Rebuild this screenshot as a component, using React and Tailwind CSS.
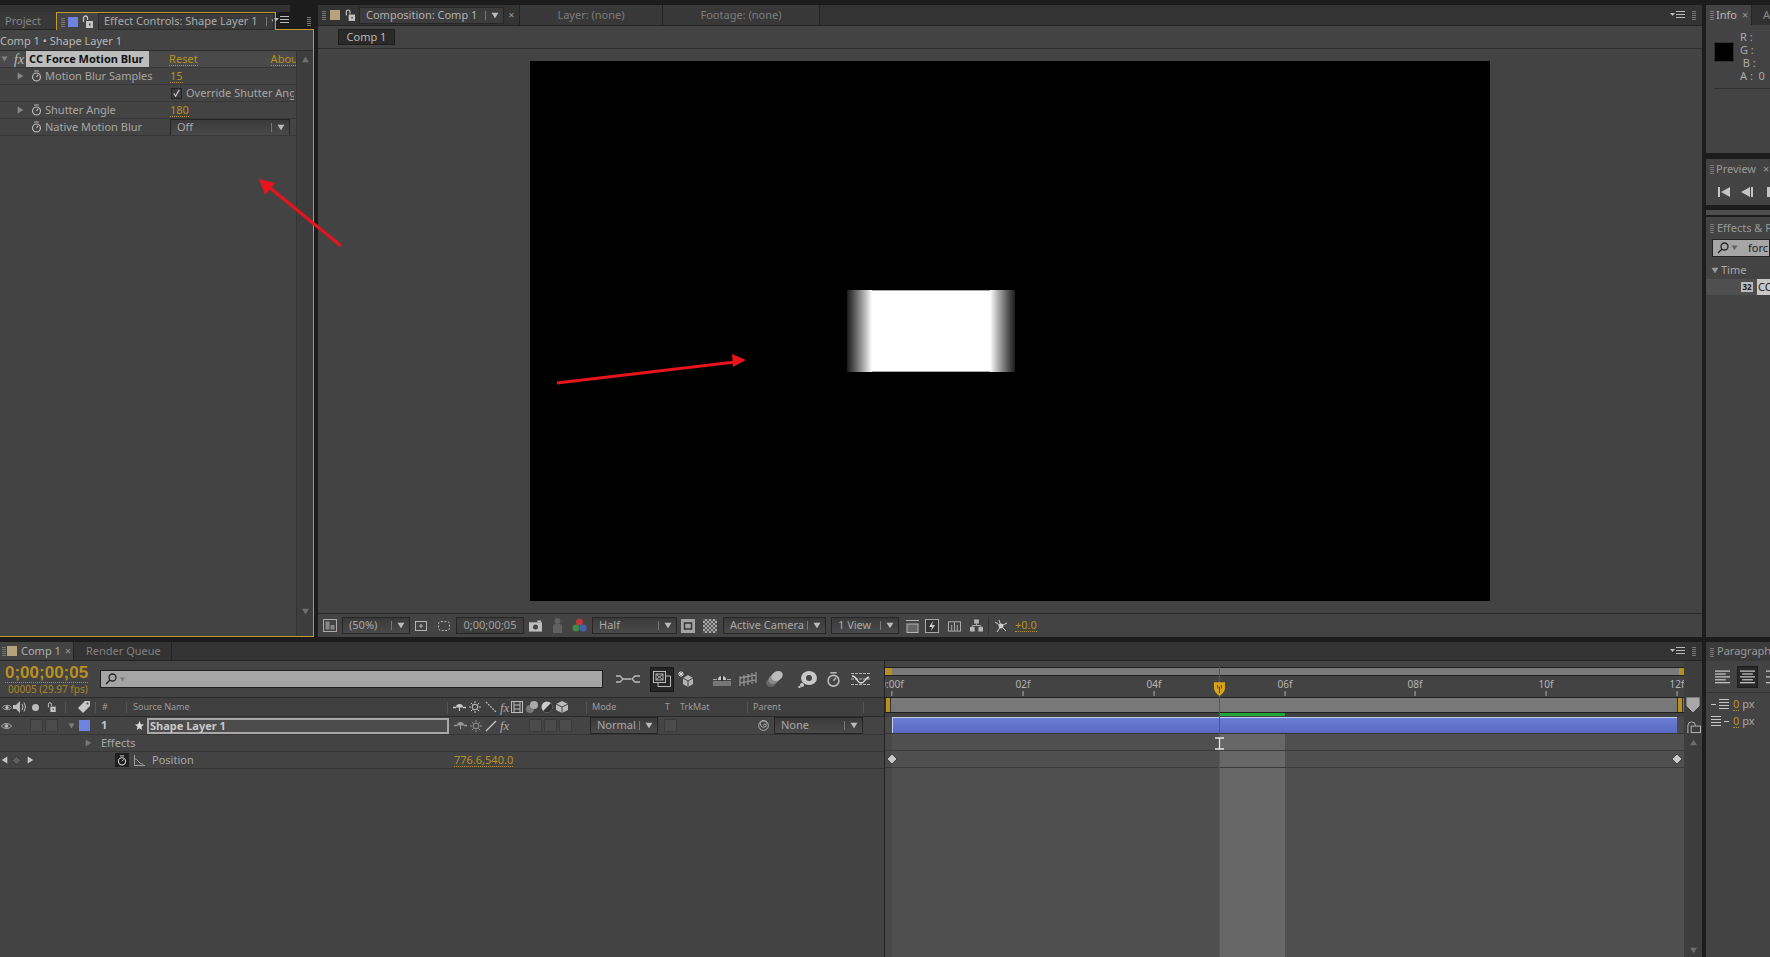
import React from 'react';

const GOLD = 'text-[#b8901f]';

function Tri({ dir = 'down', className = 'w-[7px] h-[7px] text-[#8a8a8a]' }) {
  const points = { down: '0,1 10,1 5,9', right: '1,0 9,5 1,10', left: '9,0 1,5 9,10', up: '0,9 10,9 5,1' }[dir];
  return (
    <svg viewBox="0 0 10 10" className={`shrink-0 ${className}`}>
      <polygon points={points} fill="currentColor" />
    </svg>
  );
}

function Grip({ className = '' }) {
  return <div className={`w-[4px] h-[10px] shrink-0 bg-[repeating-linear-gradient(0deg,#777_0,#777_1px,transparent_1px,transparent_2px)] ${className}`} />;
}

function MenuIcon({ className = '' }) {
  return (
    <svg viewBox="0 0 16 10" className={`w-[16px] h-[10px] shrink-0 ${className}`}>
      <polygon points="0,3 5,3 2.5,6" fill="#bbb" />
      <path d="M6 1.5h9M6 4.5h9M6 7.5h9" stroke="#bbb" strokeWidth="1.2" />
    </svg>
  );
}

function Stopwatch({ className = 'w-[12px] h-[13px]', color = '#bbb' }) {
  return (
    <svg viewBox="0 0 12 13" className={`shrink-0 ${className}`} fill="none" stroke={color}>
      <circle cx="6" cy="7.5" r="4.3" strokeWidth="1.3" />
      <path d="M3.5 1h5M6 7.5L8 5" strokeWidth="1.2" />
    </svg>
  );
}

function Lock({ className = 'w-[11px] h-[13px]' }) {
  return (
    <svg viewBox="0 0 11 13" className={`shrink-0 ${className}`}>
      <path d="M1.5 7V3a2 2 0 0 1 4 0v2" fill="none" stroke="#c4c4c4" strokeWidth="1.3" />
      <rect x="4" y="6" width="7" height="7" fill="#c4c4c4" />
      <rect x="7" y="8.5" width="1.5" height="2" fill="#444" />
    </svg>
  );
}

function Eye({ className = 'w-[11px] h-[8px]' }) {
  return (
    <svg viewBox="0 0 12 8" className={`shrink-0 ${className}`}>
      <path d="M0.5 4C3 0.5 9 0.5 11.500 4C9 7.500 3 7.500 0.500 4Z" fill="none" stroke="#bbb" />
      <circle cx="6" cy="4" r="2" fill="#bbb" />
    </svg>
  );
}

function Diamond({ className = 'w-[9px] h-[9px]', fill = '#c8c8c8' }) {
  return (
    <svg viewBox="0 0 10 10" className={`shrink-0 ${className}`}>
      <polygon points="5,0 10,5 5,10 0,5" fill={fill} stroke="#222" strokeWidth="0.7" />
    </svg>
  );
}

function Dropdown({ label, className = '' }) {
  return (
    <div className={`h-[17px] flex items-center shrink-0 border border-[#252525] bg-gradient-to-b from-[#3a3a3a] to-[#494949] text-[#a8a8a8] ${className}`}>
      <span className="flex-1 pl-[6px] truncate">{label}</span>
      <span className="w-px h-[9px] bg-[#777]" />
      <span className="w-[17px] flex justify-center"><Tri className="w-[8px] h-[7px] text-[#bbb]" /></span>
    </div>
  );
}

function Dotted({ children, className = '' }) {
  return <span className={`${GOLD} border-b border-dotted border-[#b8901f] leading-[12px] ${className}`}>{children}</span>;
}

function EffectRow({ children, className = 'bg-[#434343]' }) {
  return <div className={`h-[17px] flex items-center border-b border-[#373737] whitespace-nowrap overflow-hidden ${className}`}>{children}</div>;
}

function EffectControls() {
  return (
    <div className="w-[314px] h-full flex flex-col">
      <div className="h-[7px] w-[290px] bg-[#323232]" />
      <div className="h-[18px] flex">
        <div className="w-[56px] bg-[#383838] border-b border-[#232323] text-[#868686] pl-[5px] leading-[18px]">Project</div>
        <div className="w-[220px] border-t border-x border-[#c09a2a] bg-[#434343] flex items-center pl-[4px] text-[#aaa]">
          <Grip className="mr-[3px]" />
          <div className="w-[10px] h-[10px] bg-[#6e82e0] mr-[4px] shrink-0" />
          <Lock />
          <div className="ml-[5px] w-[176px] h-[17px] bg-[#3a3a3a] border border-[#2a2a2a] flex items-center pl-[5px] whitespace-nowrap overflow-hidden">
            Effect Controls: Shape Layer 1
            <span className="ml-[8px] w-px h-[9px] bg-[#777] shrink-0" />
            <Tri className="ml-[4px] w-[6px] h-[5px] text-[#bbb]" />
          </div>
        </div>
        <div className="flex-1 border-b border-[#c09a2a] flex items-center relative">
          <MenuIcon className="absolute left-[-2px] top-[3px]" />
          <Grip className="ml-[31px]" />
        </div>
      </div>
      <div className="flex-1 min-h-0 bg-[#434343] border-r border-b border-[#c09a2a] flex flex-col">
        <div className="h-[21px] leading-[21px] border-b border-[#2b2b2b] text-[#b8b8b8] whitespace-nowrap">Comp 1 • Shape Layer 1</div>
        <div className="flex-1 min-h-0 flex">
          <div className="w-[296px] text-[#a6a6a6]">
            <EffectRow className="bg-[#4a4a4a]">
              <Tri className="ml-[1px] w-[7px] h-[6px] text-[#808080]" />
              <span className="ml-[6px] font-['Liberation_Serif',serif] italic text-[14px] text-[#bbb] w-[11px]">fx</span>
              <span className="ml-[2px] w-[123px] h-[16px] bg-[#bdbdbd] text-[#111] font-bold pl-[3px] leading-[16px] overflow-hidden shrink-0">CC Force Motion Blur</span>
              <Dotted className="ml-[20px]">Reset</Dotted>
              <Dotted className="ml-[73px]">About</Dotted>
            </EffectRow>
            <EffectRow>
              <Tri dir="right" className="ml-[17px] w-[7px] h-[8px] text-[#888]" />
              <Stopwatch className="ml-[7px] w-[11px] h-[12px]" />
              <span className="ml-[3px] w-[125px] pt-[1px]">Motion Blur Samples</span>
              <Dotted>15</Dotted>
            </EffectRow>
            <EffectRow>
              <span className="ml-[171px] w-[11px] h-[11px] border border-[#222] bg-[#3b3b3b] flex items-center justify-center shrink-0">
                <svg viewBox="0 0 10 10" className="w-[9px] h-[9px]"><path d="M2 5l2 3 4-7" fill="none" stroke="#ccc" strokeWidth="1.3" /></svg>
              </span>
              <span className="ml-[4px] w-[108px] overflow-hidden shrink-0 pt-[1px]">Override Shutter Angle</span>
            </EffectRow>
            <EffectRow>
              <Tri dir="right" className="ml-[17px] w-[7px] h-[8px] text-[#888]" />
              <Stopwatch className="ml-[7px] w-[11px] h-[12px]" />
              <span className="ml-[3px] w-[125px]">Shutter Angle</span>
              <Dotted>180</Dotted>
            </EffectRow>
            <EffectRow>
              <Stopwatch className="ml-[31px] w-[11px] h-[12px]" />
              <span className="ml-[3px] w-[125px] pt-[1px]">Native Motion Blur</span>
              <Dropdown label="Off" className="w-[120px] h-[15px]" />
            </EffectRow>
          </div>
          <div className="flex-1 bg-[#3d3d3d] border-l border-[#333] flex flex-col items-center justify-between pt-[5px] pb-[21px]">
            <Tri dir="up" className="w-[11px] h-[7px] text-[#6e6e6e]" />
            <Tri className="w-[11px] h-[7px] text-[#6e6e6e]" />
          </div>
        </div>
      </div>
    </div>
  );
}

function CompFooter() {
  return (
    <div className="h-[24px] border-t border-[#2a2a2a] flex items-center text-[#a0a0a0] pl-[5px] whitespace-nowrap">
      <svg viewBox="0 0 14 13" className="w-[14px] h-[13px] shrink-0"><rect x="0.500" y="0.500" width="13" height="12" fill="none" stroke="#aaa" /><rect x="2.500" y="2.500" width="4" height="8" fill="#888" /><rect x="7.500" y="6" width="4" height="4.500" fill="#888" /></svg>
      <Dropdown label="(50%)" className="ml-[5px] w-[68px]" />
      <svg viewBox="0 0 14 14" className="ml-[4px] w-[14px] h-[14px] shrink-0" fill="none" stroke="#b4b4b4"><rect x="1.500" y="2.500" width="11" height="9" /><path d="M7 5v4M5 7h4" /></svg>
      <svg viewBox="0 0 14 14" className="ml-[9px] w-[14px] h-[14px] shrink-0" fill="none" stroke="#b4b4b4"><rect x="1.500" y="2.500" width="11" height="9" rx="2.500" strokeDasharray="2 1.500" /></svg>
      <div className="ml-[5px] w-[68px] h-[17px] border border-[#252525] bg-[#3d3d3d] flex items-center justify-center">0;00;00;05</div>
      <svg viewBox="0 0 14 12" className="ml-[5px] w-[13px] h-[12px] shrink-0"><rect y="2" width="14" height="10" fill="#bdbdbd" /><rect x="9" width="4" height="2" fill="#bdbdbd" /><circle cx="7" cy="7" r="2.700" fill="#444" /></svg>
      <svg viewBox="0 0 11 15" className="ml-[10px] w-[11px] h-[15px] shrink-0"><circle cx="5.500" cy="3" r="3" fill="#616161" /><path d="M1 15V8q0-2 2-2h5q2 0 2 2v7z" fill="#616161" /></svg>
      <svg viewBox="0 0 15 15" className="ml-[9px] w-[15px] h-[15px] shrink-0"><circle cx="7.500" cy="4" r="3.500" fill="#b83a3a" /><circle cx="4" cy="10" r="3.500" fill="#3f8a45" /><circle cx="11" cy="10" r="3.500" fill="#4661b0" /></svg>
      <Dropdown label="Half" className="ml-[5px] w-[85px]" />
      <svg viewBox="0 0 14 14" className="ml-[4px] w-[14px] h-[14px] shrink-0"><rect width="14" height="14" fill="#a4a4a4" /><rect x="3.500" y="4" width="7" height="6" fill="none" stroke="#333" strokeWidth="1.500" /></svg>
      <div className="ml-[8px] w-[14px] h-[14px] shrink-0 bg-[repeating-conic-gradient(#aaa_0_25%,#555_0_50%)] bg-[length:4px_4px]" />
      <Dropdown label="Active Camera" className="ml-[6px] w-[103px]" />
      <Dropdown label="1 View" className="ml-[5px] w-[68px]" />
      <svg viewBox="0 0 13 14" className="ml-[7px] w-[13px] h-[14px] shrink-0" fill="none" stroke="#b4b4b4"><path d="M0 1.500h13" /><rect x="1" y="5" width="11" height="8.500" fill="#666" /></svg>
      <svg viewBox="0 0 14 14" className="ml-[6px] w-[14px] h-[14px] shrink-0"><rect x="0.500" y="0.500" width="13" height="13" fill="#333" stroke="#aaa" /><polygon points="8,2 4,8 7,8 6,12 10,6 7,6" fill="#ccc" /></svg>
      <svg viewBox="0 0 14 13" className="ml-[9px] w-[13px] h-[13px] shrink-0" fill="none" stroke="#b4b4b4"><rect x="0.500" y="2.500" width="13" height="10" /><path d="M4 6v6M7 3v9M10 6v6" /></svg>
      <svg viewBox="0 0 14 13" className="ml-[9px] w-[13px] h-[13px] shrink-0"><rect x="4.500" width="5" height="4.500" fill="#b4b4b4" /><rect y="8" width="5" height="5" fill="#b4b4b4" /><rect x="9" y="8" width="5" height="5" fill="#b4b4b4" /><path d="M7 4.500v2M2.500 8V6.500h9V8" fill="none" stroke="#b4b4b4" /></svg>
      <span className="ml-[5px] w-px h-[18px] bg-[#333]" />
      <svg viewBox="0 0 14 14" className="ml-[5px] w-[14px] h-[14px] shrink-0" stroke="#d0d0d0" strokeWidth="1"><path d="M7 7L1 3M7 7L5 1M7 7l6-3M7 7l5 5M7 7L3 13" /><circle cx="7" cy="7" r="2" fill="#d0d0d0" /></svg>
      <Dotted className="ml-[7px]">+0.0</Dotted>
    </div>
  );
}

function CompPanel() {
  return (
    <div className="w-[1384px] h-full bg-[#434343] flex flex-col ml-[4px]">
      <div className="h-[21px] bg-[#333] border-b border-[#232323] flex items-center relative whitespace-nowrap">
        <Grip className="ml-[4px]" />
        <div className="ml-[4px] w-[10px] h-[10px] bg-[#b6a27c]" />
        <Lock className="ml-[5px] w-[10px] h-[12px]" />
        <div className="ml-[4px] w-[145px] h-[17px] bg-[#3c3c3c] border border-[#262626] flex items-center text-[#b0b0b0] pl-[6px]">
          <span className="flex-1">Composition: Comp 1</span>
          <span className="w-px h-[9px] bg-[#777]" />
          <span className="w-[17px] flex justify-center"><Tri className="w-[8px] h-[7px] text-[#bbb]" /></span>
        </div>
        <span className="w-[15px] text-center text-[#999]">×</span>
        <div className="w-[144px] h-full border-x border-[#232323] bg-[#383838] flex items-center justify-center text-[#7c7c7c]">Layer: (none)</div>
        <div className="w-[157px] h-full border-r border-[#232323] bg-[#383838] flex items-center justify-center text-[#7c7c7c]">Footage: (none)</div>
        <div className="flex-1" />
        <MenuIcon className="mr-[6px]" />
        <Grip className="mr-[6px]" />
      </div>
      <div className="h-[23px] border-b border-[#2c2c2c] flex items-center pl-[20px] pb-[1px]">
        <div className="w-[57px] h-[16px] bg-[#2a2a2a] border border-[#1e1e1e] text-[#b8b8b8] text-center leading-[14px]">Comp 1</div>
      </div>
      <div className="flex-1 min-h-0 flex items-center justify-center">
        <div className="w-[960px] h-[540px] bg-black flex items-center">
          <div className="ml-[317px] w-[168px] h-[82px] flex">
            <div className="w-[25px] bg-gradient-to-r from-[#1c1c1c] via-[#858585] to-white" />
            <div className="flex-1 bg-white border-y border-[#aaa]" />
            <div className="w-[25px] bg-gradient-to-l from-[#1c1c1c] via-[#858585] to-white" />
          </div>
        </div>
      </div>
      <CompFooter />
    </div>
  );
}

function SmallTab({ label, width, close, active }) {
  return (
    <div className={`h-full flex items-center border-r border-[#252525] ${width} ${active ? 'bg-[#434343]' : 'bg-[#383838]'}`}>
      <Grip className="ml-[4px] mr-[2px]" />
      <span className={active ? 'text-[#b8b8b8]' : 'text-[#8a8a8a]'}>{label}</span>
      {close ? <span className="ml-[5px] text-[#999]">×</span> : null}
    </div>
  );
}

function RightColumn() {
  return (
    <div className="flex-1 h-full ml-[4px] flex flex-col min-w-0 overflow-hidden">
      <div className="h-[148px] bg-[#434343] flex flex-col">
        <div className="h-[20px] bg-[#303030] flex">
          <SmallTab label="Info" width="w-[48px]" close active />
          <div className="flex-1 pl-[11px] leading-[20px] text-[#888]">A</div>
        </div>
        <div className="flex-1 pl-[8px] relative">
          <div className="flex pt-[5px] border-b border-[#2f2f2f] h-[64px]">
            <div className="w-[20px] h-[20px] mt-[12px] bg-black mr-[6px] border border-[#333]" />
            <div className="text-[#aaa] leading-[13px]">
              <div>R :</div>
              <div>G :</div>
              <div>&nbsp;B :</div>
              <div>A :&nbsp; 0</div>
            </div>
          </div>
        </div>
      </div>
      <div className="h-[46px] mt-[6px] bg-[#434343]">
        <div className="h-[20px] flex items-center">
          <Grip className="ml-[4px] mr-[2px]" />
          <span className="text-[#999]">Preview</span>
          <span className="ml-[7px] text-[#999]">×</span>
        </div>
        <div className="h-[26px] flex items-center pl-[12px]">
          <svg viewBox="0 0 12 10" className="w-[12px] h-[10px] shrink-0"><rect width="2" height="10" fill="#c4c4c4" /><polygon points="12,0 12,10 3,5" fill="#c4c4c4" /></svg>
          <svg viewBox="0 0 12 10" className="ml-[11px] w-[12px] h-[10px] shrink-0"><polygon points="9,0 9,10 0,5" fill="#c4c4c4" /><rect x="10" width="2" height="10" fill="#c4c4c4" /></svg>
          <div className="ml-[14px] w-[10px] h-[10px] bg-[#c4c4c4] shrink-0" />
        </div>
      </div>
      <div className="h-[5px] mt-[5px] bg-[#4e4e4e]" />
      <div className="flex-1 mt-[2px] bg-[#434343] flex flex-col">
        <div className="h-[22px] flex items-center">
          <Grip className="ml-[4px] mr-[3px]" />
          <span className="text-[#999] whitespace-nowrap">Effects &amp; Presets</span>
        </div>
        <div className="h-[18px] ml-[6px] bg-[#a6a6a6] border border-[#222] flex items-center pl-[4px] text-[#222] whitespace-nowrap">
          <svg viewBox="0 0 12 12" className="w-[12px] h-[12px] shrink-0" fill="none" stroke="#222" strokeWidth="1.300"><circle cx="7.500" cy="4.500" r="3.500" /><path d="M5 7l-4 4" /></svg>
          <Tri className="ml-[2px] w-[7px] h-[6px] text-[#666]" />
          <span className="ml-[10px]">forc</span>
        </div>
        <div className="mt-[4px] h-[18px] flex items-center pl-[5px] text-[#a8a8a8]">
          <Tri className="w-[8px] h-[7px] text-[#999]" />
          <span className="ml-[2px]">Time</span>
        </div>
        <div className="h-[16px] bg-[#4f4f4f] flex items-center pl-[35px]">
          <span className="w-[12px] h-[10px] bg-[#bbb] text-[#222] text-[8px] leading-[10px] text-center font-bold shrink-0">32</span>
          <span className="ml-[4px] flex-1 h-full bg-[#c8c8c8] text-[#222] pl-[1px] leading-[16px]">CC</span>
        </div>
      </div>
    </div>
  );
}

function TimelineToolbar() {
  return (
    <div className="h-[36px] flex items-center relative whitespace-nowrap">
      <div className="w-[100px] pl-[5px] pt-[1px]">
        <div className={`font-['Liberation_Sans',sans-serif] font-bold text-[17px] leading-[18px] ${GOLD} border-b border-dotted border-[#b8901f] w-fit`}>0;00;00;05</div>
        <div className="text-[10px] leading-[13px] pl-[3px] text-[#a88526]">00005 (29.97 fps)</div>
      </div>
      <div className="w-[503px] h-[18px] bg-[#a5a5a5] border border-[#1e1e1e] flex items-center pl-[4px]">
        <svg viewBox="0 0 12 12" className="w-[12px] h-[12px] shrink-0" fill="none" stroke="#222" strokeWidth="1.300"><circle cx="7.500" cy="4.500" r="3.500" /><path d="M5 7l-4 4" /></svg>
        <Tri className="ml-[2px] w-[7px] h-[5px] text-[#777]" />
      </div>
      <svg viewBox="0 0 24 13" className="ml-[13px] w-[24px] h-[13px] shrink-0" fill="none" stroke="#bbb" strokeWidth="1.300"><path d="M0 3h4l3 3-3 3H0M7 6h8M24 3h-5l-3 3 3 3h5" /></svg>
      <div className="ml-[10px] w-[24px] h-[25px] bg-[#252525] border border-[#181818] flex items-center justify-center shrink-0">
        <svg viewBox="0 0 18 16" className="w-[18px] h-[16px]" fill="none" stroke="#bbb"><rect x="0.500" y="0.500" width="12" height="11" /><rect x="3" y="3" width="7" height="6" /><path d="M3 3l7 6M10 3l-7 6" /><path d="M13 5h4.500v10.500H5V12" /></svg>
      </div>
      <svg viewBox="0 0 16 16" className="ml-[4px] w-[16px] h-[16px] shrink-0"><path d="M1 1l4 4M5 1L1 5M3 0v6M0 3h6" stroke="#ddd" /><polygon points="10,4 15,7 15,13 10,16 5,13 5,7" fill="#b4b4b4" /><path d="M5 7l5 3 5-3M10 10v6" stroke="#444" fill="none" /></svg>
      <svg viewBox="0 0 18 13" className="ml-[19px] w-[18px] h-[13px] shrink-0"><path d="M5 7a4 4 0 0 1 8 0z" fill="#c8c8c8" /><rect x="8" y="3" width="2" height="5" fill="#333" /><rect y="8" width="18" height="5" fill="#777" /><rect y="6" width="4" height="1" fill="#aaa" /><rect x="14" y="6" width="4" height="1" fill="#aaa" /></svg>
      <svg viewBox="0 0 18 15" className="ml-[8px] w-[18px] h-[15px] shrink-0" fill="none" stroke="#8e8e8e" strokeWidth="1.400"><path d="M1 4v10M5 3v11M9 2v11M13 1v11M17 0v11M1 6l16-3M1 11l16-3" /></svg>
      <svg viewBox="0 0 18 16" className="ml-[8px] w-[18px] h-[16px] shrink-0"><ellipse cx="6" cy="12" rx="5" ry="4" fill="#666" /><ellipse cx="9" cy="8" rx="6" ry="4.500" fill="#8a8a8a" transform="rotate(-30 9 8)" /><ellipse cx="12" cy="5" rx="6" ry="4.500" fill="#bcbcbc" transform="rotate(-30 12 5)" /></svg>
      <svg viewBox="0 0 19 17" className="ml-[15px] w-[19px] h-[17px] shrink-0"><ellipse cx="11" cy="7" rx="8" ry="7" fill="#c8c8c8" /><circle cx="11" cy="7" r="3" fill="#444" /><circle cx="4" cy="14" r="2" fill="#c8c8c8" /><circle cx="1.500" cy="16" r="1.200" fill="#c8c8c8" /></svg>
      <Stopwatch className="ml-[9px] w-[15px] h-[17px]" />
      <svg viewBox="0 0 19 14" className="ml-[10px] w-[19px] h-[14px] shrink-0" fill="none" stroke="#b4b4b4"><path d="M0 1.500h19M0 12.500h19M0 7h19" strokeDasharray="3 1" /><path d="M1 4c5 0 5 7 9 7s4-5 8-6" stroke="#ddd" strokeWidth="1.300" /></svg>
    </div>
  );
}

function SwitchIcons({ bright }) {
  const stroke = bright ? '#c8c8c8' : '#999';
  return (
    <>
      <svg viewBox="0 0 13 9" className="w-[13px] h-[9px] shrink-0"><path d="M0 4.500h3M10 4.500h3" stroke={stroke} strokeWidth="1.400" /><path d="M3 4.500a3.500 3.500 0 0 1 7 0z" fill={stroke} /><rect x="6" y="3" width="1" height="5" fill={stroke} /></svg>
      <svg viewBox="0 0 13 13" className="ml-[3px] w-[12px] h-[12px] shrink-0" fill="none" stroke={stroke}><circle cx="6.500" cy="6.500" r="3" /><path d="M6.500 0v2.500M6.500 10.500V13M0 6.500h2.500M10.500 6.500H13M2 2l2 2M9 9l2 2M2 11l2-2M9 4l2-2" /></svg>
    </>
  );
}

function LayerHeader() {
  return (
    <div className="h-[20px] border-y border-[#2a2a2a] bg-[#3f3f3f] flex items-center text-[9px] text-[#9a9a9a] whitespace-nowrap">
      <Eye className="ml-[2px] w-[10px] h-[7px]" />
      <svg viewBox="0 0 13 12" className="ml-[1px] w-[13px] h-[12px] shrink-0"><polygon points="0,4 3,4 7,0 7,12 3,8 0,8" fill="#bbb" /><path d="M9 3q2 3 0 6M11 1.500q3 4.500 0 9" fill="none" stroke="#bbb" /></svg>
      <span className="ml-[6px] w-[7px] h-[7px] rounded-full bg-[#bbb] shrink-0" />
      <Lock className="ml-[8px] w-[9px] h-[10px]" />
      <span className="ml-[9px] w-px h-[11px] bg-[#555]" />
      <svg viewBox="0 0 15 13" className="ml-[12px] w-[15px] h-[13px] shrink-0"><polygon points="0,7 7,0 12,0 12,5 5,12" fill="#c8c8c8" /><circle cx="9.500" cy="2.500" r="1" fill="#444" /></svg>
      <span className="ml-[2px] w-px h-[11px] bg-[#555]" />
      <span className="ml-[6px] w-[24px]">#</span>
      <span className="w-px h-[11px] bg-[#555]" />
      <span className="ml-[6px] w-[314px]">Source Name</span>
      <span className="w-px h-[11px] bg-[#555]" />
      <span className="ml-[5px] flex items-center w-[133px]">
        <SwitchIcons bright />
        <svg viewBox="0 0 12 12" className="ml-[4px] w-[12px] h-[12px] shrink-0"><path d="M1 1l10 10" stroke="#bbb" strokeWidth="1.200" strokeDasharray="2 1" /></svg>
        <span className="ml-[3px] font-['Liberation_Serif',serif] italic text-[13px] text-[#aaa] leading-[13px]">fx</span>
        <svg viewBox="0 0 12 12" className="ml-[2px] w-[12px] h-[12px] shrink-0" fill="none" stroke="#bbb"><rect x="0.500" y="0.500" width="11" height="11" /><path d="M3 0v12M9 0v12M3 4h6M3 8h6" /></svg>
        <svg viewBox="0 0 12 12" className="ml-[3px] w-[12px] h-[12px] shrink-0"><circle cx="4" cy="8" r="4" fill="#777" /><circle cx="8" cy="4" r="4" fill="#aaa" /></svg>
        <svg viewBox="0 0 12 12" className="ml-[3px] w-[12px] h-[12px] shrink-0"><circle cx="6" cy="6" r="5.500" fill="#ccc" /><path d="M6 .5a5.500 5.500 0 0 1 0 11z" fill="#333" transform="rotate(45 6 6)" /></svg>
        <svg viewBox="0 0 12 12" className="ml-[3px] w-[12px] h-[12px] shrink-0"><polygon points="6,0 12,3 12,9 6,12 0,9 0,3" fill="#bbb" /><path d="M0 3l6 3 6-3M6 6v6" stroke="#444" fill="none" /></svg>
      </span>
      <span className="w-px h-[11px] bg-[#555]" />
      <span className="ml-[5px] w-[73px]">Mode</span>
      <span className="w-[15px]">T</span>
      <span className="w-[67px]">TrkMat</span>
      <span className="w-px h-[11px] bg-[#555]" />
      <span className="ml-[5px] w-[110px]">Parent</span>
      <span className="w-px h-[11px] bg-[#555]" />
    </div>
  );
}

function LayerRow() {
  return (
    <div className="h-[18px] border-b border-[#353535] bg-[#444] flex items-center whitespace-nowrap">
      <Eye className="ml-[1px] w-[11px] h-[8px]" />
      <span className="ml-[18px] w-[13px] h-[13px] bg-[#4b4b4b] border border-[#3a3a3a] shrink-0" />
      <span className="ml-[2px] w-[13px] h-[13px] bg-[#4b4b4b] border border-[#3a3a3a] shrink-0" />
      <Tri className="ml-[10px] w-[7px] h-[6px] text-[#7e7e7e]" />
      <span className="ml-[4px] w-[11px] h-[11px] bg-[#6e82e0] shrink-0" />
      <span className="ml-[11px] w-[34px] font-bold text-[#c4c4c4]">1</span>
      <svg viewBox="0 0 10 10" className="w-[9px] h-[9px] shrink-0"><polygon points="5,0 6.500,3.500 10,4 7.200,6.300 8,10 5,8 2,10 2.800,6.300 0,4 3.500,3.500" fill="#d8d8d8" /></svg>
      <div className="ml-[3px] w-[302px] h-[16px] border-2 border-[#a8a8a8] bg-[#4c4c4c] font-bold text-[#c8c8c8] leading-[12px] pl-[1px]">Shape Layer 1</div>
      <span className="ml-[5px] flex items-center w-[75px]">
        <SwitchIcons />
        <svg viewBox="0 0 12 12" className="ml-[3px] w-[12px] h-[12px] shrink-0"><path d="M1 11L11 1" stroke="#c8c8c8" strokeWidth="1.300" /></svg>
        <span className="ml-[3px] font-['Liberation_Serif',serif] italic text-[13px] text-[#aaa] leading-[13px]">fx</span>
      </span>
      <span className="w-[13px] h-[13px] bg-[#4b4b4b] border border-[#3a3a3a] shrink-0" />
      <span className="ml-[2px] w-[13px] h-[13px] bg-[#4b4b4b] border border-[#3a3a3a] shrink-0" />
      <span className="ml-[2px] w-[13px] h-[13px] bg-[#4b4b4b] border border-[#3a3a3a] shrink-0" />
      <Dropdown label="Normal" className="ml-[18px] w-[68px] h-[15px]" />
      <span className="ml-[6px] w-[13px] h-[13px] bg-[#4b4b4b] border border-[#3a3a3a] shrink-0" />
      <svg viewBox="0 0 12 12" className="ml-[81px] w-[11px] h-[11px] shrink-0" fill="none" stroke="#bbb"><path d="M6 6a1.500 1.500 0 1 1 1.500 1.500A3.500 3.500 0 1 1 9.500 4" /><circle cx="6" cy="6" r="5.300" /></svg>
      <Dropdown label="None" className="ml-[5px] w-[89px] h-[15px]" />
    </div>
  );
}

function TimelineLeft() {
  return (
    <div className="w-[885px] h-full border-r border-[#222] flex flex-col shrink-0 text-[#a8a8a8]">
      <TimelineToolbar />
      <LayerHeader />
      <LayerRow />
      <div className="h-[17px] border-b border-[#353535] flex items-center pl-[85px]">
        <Tri dir="right" className="w-[7px] h-[8px] text-[#777]" />
        <span className="ml-[9px]">Effects</span>
      </div>
      <div className="h-[17px] border-b border-[#353535] flex items-center whitespace-nowrap">
        <Tri dir="left" className="ml-[1px] w-[7px] h-[10px] text-[#c4c4c4]" />
        <Diamond className="ml-[4px] w-[9px] h-[9px]" fill="#5e5e5e" />
        <Tri dir="right" className="ml-[6px] w-[7px] h-[10px] text-[#c4c4c4]" />
        <span className="ml-[81px] w-[14px] h-[14px] bg-[#1f1f1f] flex items-center justify-center shrink-0">
          <Stopwatch className="w-[10px] h-[11px]" color="#ccc" />
        </span>
        <svg viewBox="0 0 12 12" className="ml-[5px] w-[11px] h-[11px] shrink-0" fill="none" stroke="#aaa"><path d="M.5 0v11.500H12M1 4c3 0 4 6 9 6" /></svg>
        <span className="ml-[7px] w-[302px]">Position</span>
        <Dotted>776.6,540.0</Dotted>
      </div>
    </div>
  );
}

const RULER_TICKS = [
  { left: 7, label: '0:00f' },
  { left: 138, label: '02f' },
  { left: 269, label: '04f' },
  { left: 400, label: '06f' },
  { left: 530, label: '08f' },
  { left: 661, label: '10f' },
  { left: 792, label: '12f' },
];

function TimelineRight() {
  return (
    <div className="flex-1 h-full flex min-w-0">
      <div className="w-[799px] h-full flex flex-col relative shrink-0">
        <div className="h-[6px]" />
        <div className="h-[9px] bg-[#7a7a7a] border-y border-[#1f1f1f] relative">
          <div className="absolute left-0 top-0 w-[7px] h-full bg-[#b8901f]" />
          <div className="absolute right-0 top-0 w-[5px] h-full bg-[#b8901f]" />
        </div>
        <div className="h-[21px] relative overflow-hidden text-[10px] text-[#b4b4b4]">
          {RULER_TICKS.map((tick) => (
            <div key={tick.label} className="absolute top-0 h-full flex flex-col items-center -translate-x-1/2" style={{ left: tick.left }}>
              <span className="leading-[13px] mt-[2px]">{tick.label}</span>
              <span className="w-px h-[5px] bg-[#aaa]" />
            </div>
          ))}
        </div>
        <div className="h-[16px] bg-[#787878] border-y border-[#1f1f1f] relative">
          <div className="absolute left-0 top-0 w-[6px] h-full bg-[#b8901f] border-x border-[#333]" />
          <div className="absolute right-[1px] top-0 w-[6px] h-full bg-[#b8901f] border-x border-[#333]" />
        </div>
        <div className="h-[4px] bg-[#404040] relative">
          <div className="absolute left-[335px] top-0 w-[65px] h-[3px] bg-[#22a63a]" />
        </div>
        <div className="h-[17px] pl-[7px] pr-[7px] bg-[#4a4a4a] border-b border-[#353535]">
          <div className="h-[16px] bg-gradient-to-b from-[#6c7dd6] to-[#5869c2] border-t border-l border-[#c4ccf0]" />
        </div>
        <div className="flex-1 min-h-0 flex flex-col bg-[#4f4f4f] relative">
          <div className="absolute left-0 top-0 w-[7px] h-full bg-[#484848]" />
          <div className="absolute left-[334px] top-0 w-[66px] h-full bg-[#676767]" />
          <div className="relative h-[17px] border-b border-[#3a3a3a]" />
          <div className="relative h-[17px] border-b border-[#3a3a3a]">
            <Diamond className="absolute left-[2px] top-[3px] w-[10px] h-[10px]" />
            <Diamond className="absolute right-[2px] top-[3px] w-[10px] h-[10px]" />
          </div>
        </div>
        <div className="absolute left-[334px] top-[6px] bottom-0 w-px bg-[#c8282c]" />
        <svg viewBox="0 0 12 15" className="absolute left-[329px] top-[21px] w-[11px] h-[14px]"><path d="M0 0h12v6q0 5-6 9q-6-4-6-9z" fill="#d9a514" /><path d="M4 3v4M8 3v4M6 5v7" stroke="#4a3a08" /></svg>
        <svg viewBox="0 0 9 13" className="absolute left-[330px] top-[76px] w-[9px] h-[13px]" fill="none" stroke="#e4e4e4" strokeWidth="1.300"><path d="M0 1h9M0 12h9M4.500 1v11" /></svg>
      </div>
      <div className="flex-1 bg-[#3d3d3d] flex flex-col items-center relative">
        <svg viewBox="0 0 14 16" className="mt-[36px] w-[14px] h-[16px]"><path d="M0 0h14v9l-7 7-7-7z" fill="#a8a8a8" stroke="#222" strokeWidth="0.700" /></svg>
        <svg viewBox="0 0 16 15" className="mt-[7px] w-[15px] h-[14px]" fill="none" stroke="#bbb"><rect x="5.500" y="6.500" width="10" height="7" /><path d="M2 14V6a4 4 0 0 1 8 0" /></svg>
        <Tri dir="up" className="mt-[5px] w-[11px] h-[7px] text-[#6e6e6e]" />
        <Tri className="mt-auto mb-[3px] w-[11px] h-[7px] text-[#6e6e6e]" />
      </div>
    </div>
  );
}

function Timeline() {
  return (
    <div className="w-[1702px] h-full bg-[#434343] flex flex-col shrink-0">
      <div className="h-[19px] bg-[#333] border-b border-[#232323] flex items-center whitespace-nowrap">
        <div className="w-[74px] h-full bg-[#434343] border-r border-[#232323] flex items-center pl-[2px]">
          <Grip className="mr-[1px]" />
          <span className="w-[10px] h-[10px] bg-[#b6a27c] mr-[4px] shrink-0" />
          <span className="text-[#b0b0b0]">Comp 1</span>
          <span className="ml-[4px] text-[#999]">×</span>
        </div>
        <div className="w-[98px] h-full border-r border-[#232323] text-[#808080] pl-[12px] leading-[18px]">Render Queue</div>
        <div className="flex-1" />
        <MenuIcon className="mr-[6px]" />
        <Grip className="mr-[6px]" />
      </div>
      <div className="flex-1 min-h-0 flex">
        <TimelineLeft />
        <TimelineRight />
      </div>
    </div>
  );
}

function AlignIcon({ lines }) {
  return (
    <svg viewBox="0 0 14 13" className="w-[15px] h-[14px] shrink-0" stroke="#c4c4c4" strokeWidth="1.200">
      {lines.map((line, i) => <path key={i} d={`M${line[0]} ${1 + i * 2.700}H${line[1]}`} />)}
    </svg>
  );
}

function ParagraphPanel() {
  return (
    <div className="flex-1 ml-[4px] h-full bg-[#434343] flex flex-col overflow-hidden text-[#a8a8a8]">
      <div className="h-[19px] bg-[#3a3a3a] flex items-center whitespace-nowrap">
        <Grip className="ml-[4px] mr-[3px]" />
        <span className="text-[#999]">Paragraph</span>
      </div>
      <div className="h-[32px] border-b border-[#333] flex items-center pl-[9px]">
        <AlignIcon lines={[[0, 14], [0, 10], [0, 14], [0, 10], [0, 14]]} />
        <span className="ml-[7px] w-[21px] h-[22px] bg-[#282828] border border-[#1c1c1c] flex items-center justify-center shrink-0">
          <AlignIcon lines={[[0, 14], [2, 12], [0, 14], [2, 12], [0, 14]]} />
        </span>
        <span className="ml-[8px]"><AlignIcon lines={[[0, 14], [4, 14], [0, 14], [4, 14], [0, 14]]} /></span>
      </div>
      <div className="mt-[3px] h-[17px] flex items-center pl-[5px]">
        <svg viewBox="0 0 18 11" className="w-[18px] h-[11px] shrink-0" stroke="#c4c4c4"><path d="M0 5.500h5M8 .5h10M8 3.500h10M8 6.500h10M8 9.500h10" /></svg>
        <Dotted className="ml-[4px]">0</Dotted>
        <span className="ml-[3px]">px</span>
      </div>
      <div className="h-[17px] flex items-center pl-[5px]">
        <svg viewBox="0 0 18 11" className="w-[18px] h-[11px] shrink-0" stroke="#c4c4c4"><path d="M13 5.500h5M0 .5h10M0 3.500h10M0 6.500h10M0 9.500h10" /></svg>
        <Dotted className="ml-[4px]">0</Dotted>
        <span className="ml-[3px]">px</span>
      </div>
    </div>
  );
}

export default function App() {
  return (
    <div className="relative w-[1770px] h-[957px] overflow-hidden bg-[#1c1c1c] flex flex-col font-['Noto_Sans',sans-serif] text-[11px]">
      <div className="h-[637px] pt-[5px] flex shrink-0">
        <EffectControls />
        <CompPanel />
        <RightColumn />
      </div>
      <div className="flex-1 min-h-0 mt-[5px] flex">
        <Timeline />
        <ParagraphPanel />
      </div>
      <svg viewBox="0 0 1770 957" className="absolute inset-0 w-[1770px] h-[957px] pointer-events-none">
        <path d="M341 246L269 187" stroke="#e8141c" strokeWidth="3" />
        <polygon points="259,179 275,183 265,195" fill="#e8141c" />
        <path d="M557 383L735 362" stroke="#e8141c" strokeWidth="3" />
        <polygon points="746,360 732,354 733,367" fill="#e8141c" />
      </svg>
    </div>
  );
}
